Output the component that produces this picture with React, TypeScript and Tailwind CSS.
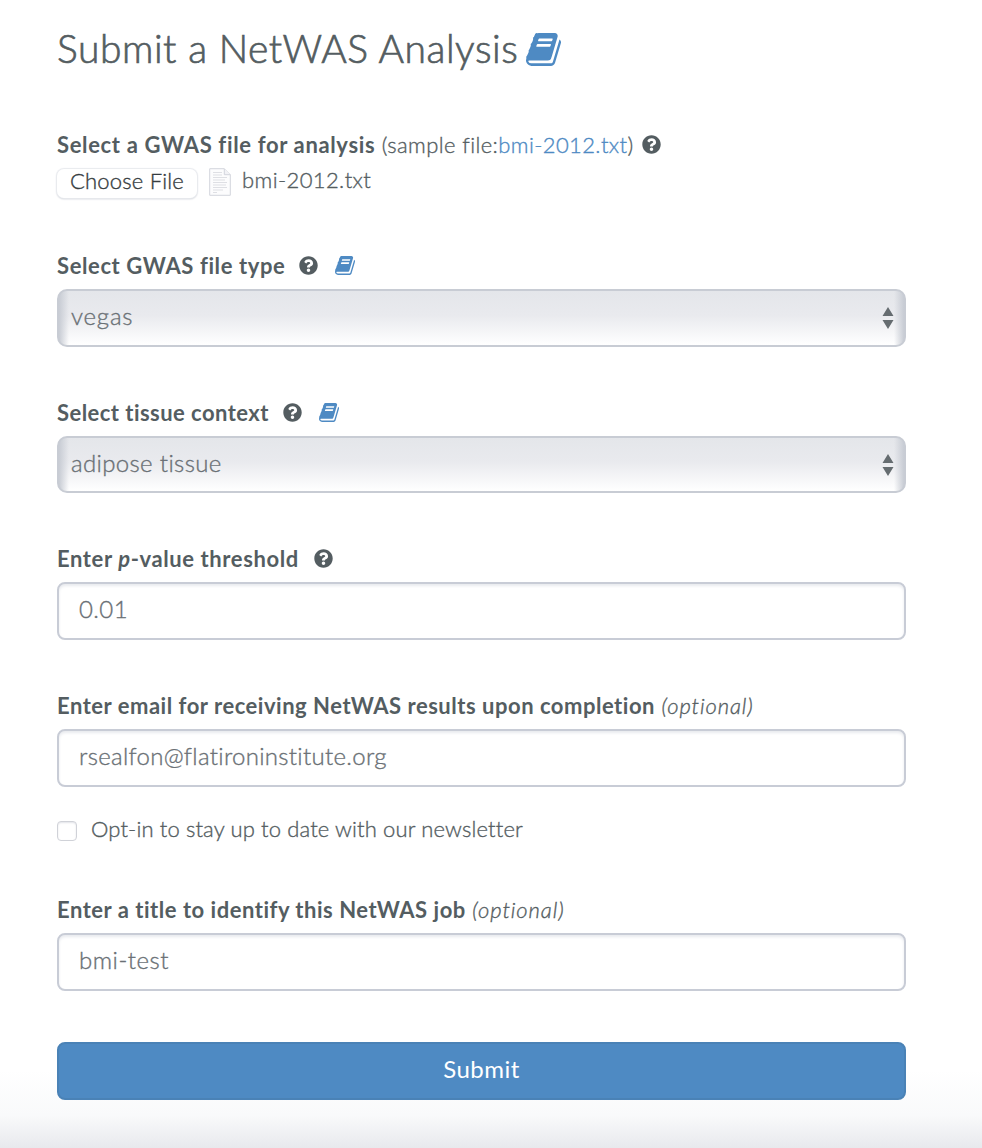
import type { ReactNode } from "react";
import { FaQuestionCircle } from "react-icons/fa";

function Book({ className }: { className: string }) {
  return (
    <svg viewBox="0 128 1664 1536" preserveAspectRatio="none" fill="currentColor" className={`shrink-0 text-[#4e8ac3] ${className}`}>
      <path d="M1639 478q40 57 18 129l-275 906q-19 64-76.5 107.5t-122.5 43.5h-923q-77 0-148.5-53.5t-99.5-131.5q-24-67-2-127 0-4 3-27t4-37q1-8-3-21.5t-3-19.5q2-11 8-21t16.5-23.5 16.5-23.5q23-38 45-91.5t30-91.5q3-10 .5-30t-.5-28q3-11 17-28t17-23q21-36 42-92t25-90q1-9-2.5-32t.5-28q4-13 22-30.5t22-22.5q19-26 42.5-84.5t27.5-96.5q1-8-3-25.5t-2-26.5q2-8 9-18t18-23 17-21q8-12 16.5-30.5t15-35 16-36 19.5-32 26.5-23.5 36-11.5 47.5 5.5l-1 3q38-9 51-9h761q74 0 114 56t18 130l-274 906q-36 119-71.5 153.5t-128.5 34.5h-869q-27 0-38 15-11 16-1 43 24 70 144 70h923q29 0 56-15.5t35-41.5l300-987q7-22 5-57 38 15 59 43zm-1064 2q-4 13 2 22.5t20 9.5h608q13 0 25.5-9.5t16.5-22.5l21-64q4-13-2-22.5t-20-9.5h-608q-13 0-25.5 9.5t-16.5 22.5zm-83 256q-4 13 2 22.5t20 9.5h608q13 0 25.5-9.5t16.5-22.5l21-64q4-13-2-22.5t-20-9.5h-608q-13 0-25.5 9.5t-16.5 22.5z" />
    </svg>
  );
}

function Help({ className }: { className: string }) {
  return <FaQuestionCircle className={`size-[19px] shrink-0 ${className}`} />;
}

function Label({ className, children }: { className: string; children: ReactNode }) {
  return <div className={`flex h-[30px] items-center pb-px whitespace-pre text-[22px] leading-[28px] ${className}`}>{children}</div>;
}

function SelectBox({ className, children }: { className: string; children: ReactNode }) {
  return (
    <div className={`mt-2 flex items-center justify-between rounded-[10px] border-2 border-[#c8ccd4] bg-[linear-gradient(to_right,#c8ccd4_0,#c8ccd400_10px,#c8ccd400_calc(100%-10px),#c8ccd4_100%),linear-gradient(to_bottom,#e4e6ea,#e9eaee_45%,#ffffff)] pr-2.5 pl-3 text-[24px] text-[#6a7075] ${className}`}>
      <span className="pb-1">{children}</span>
      <svg viewBox="0 0 12 22" className="h-[22px] w-3 fill-[#656c70]">
        <path d="M6 0 11.5 9H.5ZM.5 13h11L6 22Z" />
      </svg>
    </div>
  );
}

function Field({ children }: { children: ReactNode }) {
  return (
    <div className="mt-2 flex h-[58px] items-center rounded-lg border-2 border-[#c8ccd6] bg-white px-5 pb-1 text-[24px] text-[#6a7075] shadow-[inset_0_2px_3px_#e8eaee]">
      {children}
    </div>
  );
}

function Optional() {
  return <i className="tracking-[0.9px]"> (optional)</i>;
}

export default function App() {
  return (
    <main className="h-[1148px] w-[982px] bg-[linear-gradient(to_bottom,#ffffff_0,#ffffff_1070px,#f9fafb_1115px,#e8e9ed_1148px)] pt-[25px] pr-[76px] pl-[57px] font-['Lato','Nunito',sans-serif] font-light text-[#545d61] [-webkit-text-stroke:0.35px]">
      <h1 className="flex h-[50px] items-center text-[39px] leading-[46px] [-webkit-text-stroke:0.7px]">
        <span className="w-[469px] pb-1 whitespace-nowrap tracking-[0.54px]">Submit a NetWAS Analysis</span>
        <Book className="-mt-0.5 h-[33px] w-[35px]" />
      </h1>

      <Label className="mt-[55px]">
        <b className="font-bold tracking-[0.65px] [-webkit-text-stroke:0]">Select a GWAS file for analysis</b>
        <span className="tracking-[0.4px]"> (sample file:</span>
        <a className="tracking-[0.4px] text-[#4e8ac3]">bmi-2012.txt</a>
        <span className="tracking-[0.4px]">)</span>
        <Help className="-mt-px ml-2" />
      </Label>
      <div className="mt-2 flex h-[30px] items-center text-[22px]">
        <button className="flex h-[29px] w-[140px] items-center justify-center rounded-[7px] bg-white pb-[5px] tracking-[0.2px] text-[#363c40] shadow-[0_0_1px_1px_#e8eaee,0_1px_2px_#c0c4cd]">Choose File</button>
        <svg viewBox="0 0 22 28" className="-mt-0.5 ml-3 h-7 w-[22px]">
          <path d="M.7.7h14.6l6 6v20.6H.7Z" fill="#fcfcfd" stroke="#d3d5dd" />
          <path d="M15.3.7v6h6" fill="#f2f2f6" stroke="#d3d5dd" />
          <path d="M4 4.5h9M4 7h9M4 9.5h14M4 12h12M4 14.5h14M4 17h13M4 19.5h14M4 22h10M4 24.5h4" stroke="#dedfe4" strokeWidth="1" />
        </svg>
        <span className="-mt-2 ml-[11px] tracking-[0.4px]">bmi-2012.txt</span>
      </div>

      <Label className="mt-[53px]">
        <b className="font-bold tracking-[0.6px] [-webkit-text-stroke:0]">Select GWAS file type</b>
        <Help className="-mt-px ml-[14px]" />
        <Book className="-mt-px ml-[17px] h-[19px] w-5" />
      </Label>
      <SelectBox className="h-[58px] tracking-[0.8px]">vegas</SelectBox>

      <Label className="mt-[51px]">
        <b className="font-bold tracking-[0.45px] [-webkit-text-stroke:0]">Select tissue context</b>
        <Help className="-mt-px ml-[14px]" />
        <Book className="-mt-px ml-[17px] h-[19px] w-5" />
      </Label>
      <SelectBox className="h-[57px] tracking-[0.35px]">adipose tissue</SelectBox>

      <Label className="mt-[51px]">
        <b className="font-bold tracking-[0.6px] [-webkit-text-stroke:0]">Enter <i>p</i>-value threshold</b>
        <Help className="-mt-px ml-[15px]" />
      </Label>
      <Field><span className="tracking-[0.4px]">0.01</span></Field>

      <Label className="mt-[51px]">
        <b className="font-bold tracking-[0.52px] [-webkit-text-stroke:0]">Enter email for receiving NetWAS results upon completion</b>
        <Optional />
      </Label>
      <Field><span className="tracking-[0.3px]">rsealfon@flatironinstitute.org</span></Field>

      <div className="mt-[29px] flex h-[30px] items-center text-[22px]">
        <span className="size-5 rounded border border-[#d0d2d8] bg-white shadow-[inset_0_1px_2px_#e2e3e8]" />
        <span className="-mt-[5px] ml-[14px] tracking-[0.14px]">Opt-in to stay up to date with our newsletter</span>
      </div>

      <Label className="mt-[49px]">
        <b className="font-bold tracking-[0.52px] [-webkit-text-stroke:0]">Enter a title to identify this NetWAS job</b>
        <Optional />
      </Label>
      <Field><span className="tracking-[0.5px]">bmi-test</span></Field>

      <button className="mt-[51px] flex h-[58px] w-full items-center justify-center rounded-lg border-2 border-[#4a82b6] bg-[#4e8ac3] pb-1 text-[24px] font-normal tracking-[0.5px] text-white [-webkit-text-stroke:0]">Submit</button>
    </main>
  );
}
